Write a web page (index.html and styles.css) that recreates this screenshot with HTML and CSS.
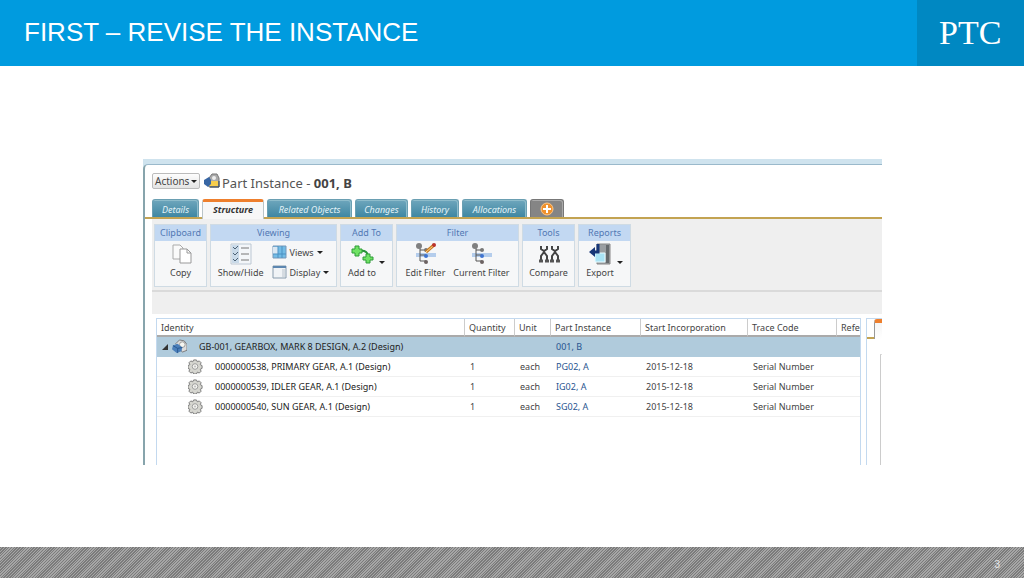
FILE: index.html
```html
<!DOCTYPE html>
<html lang="en">
<head>
<meta charset="utf-8">
<title>First – Revise the Instance</title>
<link rel="stylesheet" href="styles.css">
</head>
<body>
<svg class="defs" aria-hidden="true">
  <symbol id="gear" viewBox="0 0 16 16">
    <path d="M6 1h3l1 2 2-1 2 2-1 2 2 1v3l-2 1 1 2-2 2-2-1-1 2H6l-1-2-2 1-2-2 1-2-2-1V7l2-1-1-2 2-2 2 1z" fill="#d6d6d0" stroke="#777"/>
    <circle cx="7.500" cy="8" r="3" fill="#f2f2ee" stroke="#999"/>
    <circle cx="7.500" cy="8" r="1" fill="#bbb"/>
  </symbol>
  <symbol id="tree" viewBox="0 0 24 22">
    <path d="M3 12h20" stroke="#b4cdec" stroke-width="4"/>
    <path d="M7 4v14h6M7 7h6M7 12h6" fill="none" stroke="#555"/>
    <circle cx="6" cy="3" r="3" fill="#808080"/>
    <circle cx="13" cy="7" r="2" fill="#777"/>
    <circle cx="13" cy="13" r="2" fill="#3f74d0"/>
    <circle cx="13" cy="19" r="2" fill="#6c6262"/>
  </symbol>
</svg>
<header class="banner">
  <h1 class="banner-title">FIRST – REVISE THE INSTANCE</h1>
  <div class="brand">PTC</div>
</header>
<main class="stage">
  <section class="app">
    <div class="app-top"></div>
    <div class="app-body">
      <div class="heading">
        <button class="actions" type="button">Actions <span class="caret"></span></button>
        <svg class="part-icon" viewBox="0 0 16 16"><path d="M5 5l3-4h5l2 4v9H5z" fill="#aaa" stroke="#777"/><circle cx="10" cy="5" r="2" fill="#eee"/><path d="M5 8h9v5H5z" fill="#f6cd4c"/><path d="M0 7l5-3 2 3v4l-3 3-4-3z" fill="#3866a4"/><path d="M6 14h9V8" stroke="#345" fill="none"/></svg>
        <h2 class="object-name">Part Instance - <b>001, B</b></h2>
      </div>
      <nav class="tabs">
        <a class="tab tab-details" href="#">Details</a>
        <a class="tab tab-structure active" href="#">Structure</a>
        <a class="tab tab-related" href="#">Related Objects</a>
        <a class="tab tab-changes" href="#">Changes</a>
        <a class="tab tab-history" href="#">History</a>
        <a class="tab tab-allocations" href="#">Allocations</a>
        <a class="tab tab-new" href="#" aria-label="New tab"><svg class="plus" viewBox="0 0 14 14"><circle cx="7" cy="7" r="6" fill="#f0912c" stroke="#ffc888"/><path d="M7 3v8M3 7h8" stroke="#fff" stroke-width="2"/></svg></a>
      </nav>
      <div class="toolbar">
        <section class="group group-small">
          <h3 class="group-title">Clipboard</h3>
          <div class="group-body">
            <button class="tool" type="button"><svg class="tool-icon" viewBox="0 0 24 22"><path d="M4 2h7l3 3v11H4z" fill="#fafafa" stroke="#aaa"/><path d="M11 6h7l4 4v10H11z" fill="#fff" stroke="#999"/><path d="M18 6v4h4" fill="none" stroke="#999"/></svg>Copy</button>
          </div>
        </section>
        <section class="group group-view">
          <h3 class="group-title">Viewing</h3>
          <div class="group-body">
            <button class="tool" type="button"><svg class="tool-icon" viewBox="0 0 24 22"><path d="M2 1h20v20H2z" fill="#f3f6f9" stroke="#bcc8d3"/><path d="M3 2h7v18H3z" fill="#c9dae9"/><path d="M4 4l2 2 3-3M4 10l2 2 3-3M4 16l2 2 3-3" fill="none" stroke="#4d6274"/><path d="M12 5h8M12 11h8M12 17h8" stroke="#777"/></svg>Show/Hide</button>
            <div class="stack">
              <button class="mini" type="button"><svg class="mini-icon" viewBox="0 0 15 14"><path d="M1 1h13v12H1z" fill="#73bce6" stroke="#7797b8"/><path d="M1 2h5v7H1z" fill="#d9e7f3"/><path d="M6 1v12M10 1v12M1 9h13" stroke="#4c91c2"/></svg>Views <span class="caret"></span></button>
              <button class="mini" type="button"><svg class="mini-icon" viewBox="0 0 15 14"><path d="M1 1h13v12H1z" fill="#f0f3f6" stroke="#899cad"/><path d="M1 2h13" stroke="#5c86b0" stroke-width="2"/><path d="M10 4h3v8h-3z" fill="#d5dbe1"/></svg>Display <span class="caret"></span></button>
            </div>
          </div>
        </section>
        <section class="group group-small">
          <h3 class="group-title">Add To</h3>
          <div class="group-body">
            <button class="tool" type="button"><svg class="tool-icon" viewBox="0 0 24 22"><path d="M10 8q7-1 8 5" fill="none" stroke="#29923a" stroke-width="2"/><path d="M5 3h4v3h3v4H9v3H5v-3H2V6h3z" fill="#6fe264" stroke="#2f9c38"/><path d="M16 11h4v3h3v3h-3v3h-4v-3h-3v-3h3z" fill="#6fe264" stroke="#2f9c38"/></svg>Add to</button>
            <span class="caret caret-side"></span>
          </div>
        </section>
        <section class="group group-filter">
          <h3 class="group-title">Filter</h3>
          <div class="group-body">
            <button class="tool" type="button"><svg class="tool-icon" viewBox="0 0 24 22"><use href="#tree"/><path d="M13 9l8-7" stroke="#c97a22" stroke-width="3"/><path d="M13 9l7-6" stroke="#ffd98a"/><circle cx="21" cy="2" r="2" fill="#ba332d"/></svg>Edit Filter</button>
            <button class="tool" type="button"><svg class="tool-icon" viewBox="0 0 24 22"><use href="#tree"/></svg>Current Filter</button>
          </div>
        </section>
        <section class="group group-small">
          <h3 class="group-title">Tools</h3>
          <div class="group-body">
            <button class="tool" type="button"><svg class="tool-icon" viewBox="0 0 24 22"><g fill="none" stroke="#444" stroke-width="2"><path d="M4 3v3l3 2 3-2V3M7 8v2M7 9l-3 4v5M7 9l3 4v5"/><path d="M15 3v3l3 2 3-2V3M18 8v2M18 9l-3 4v5M18 9l3 4v5"/></g><path d="M2 18h4M8 18h4M13 18h4M19 18h4" stroke="#555" stroke-width="3"/></svg>Compare</button>
          </div>
        </section>
        <section class="group group-small">
          <h3 class="group-title">Reports</h3>
          <div class="group-body">
            <button class="tool" type="button"><svg class="tool-icon" viewBox="0 0 24 22"><path d="M9 1h13v20H9z" fill="#9a9ea1" stroke="#888"/><path d="M18 2h3v18h-3z" fill="#65696c"/><path d="M7 10h10v9H7z" fill="#a9e4f6" stroke="#e9fbff"/><path d="M10 1v8H5" fill="none" stroke="#173778" stroke-width="3"/><path d="M1 9l6-5v10z" fill="#173778"/></svg>Export</button>
            <span class="caret caret-side"></span>
          </div>
        </section>
      </div>
      <div class="subbar"></div>
      <div class="content">
        <div class="grid">
          <table class="parts">
            <colgroup><col><col class="col-qty"><col class="col-unit"><col class="col-part"><col class="col-start"><col class="col-trace"><col class="col-ref"></colgroup>
            <thead><tr><th>Identity</th><th>Quantity</th><th>Unit</th><th>Part Instance</th><th>Start Incorporation</th><th>Trace Code</th><th>Refe</th></tr></thead>
            <tbody>
              <tr class="selected"><td><div class="identity root"><svg class="expander" viewBox="0 0 6 6"><path d="M6 0v6H0z" fill="#333"/></svg><svg class="row-icon" viewBox="0 0 16 16"><path d="M4 5l4-4 5 1 3 4v6l-5 2z" fill="#ddd" stroke="#777"/><circle cx="11" cy="6" r="3" fill="#f6f6f1" stroke="#999"/><path d="M1 7l5-2 5 4-1 4-5 2-5-4z" fill="#4b7fba"/><path d="M1 7l5 3 5-1M6 10v5" fill="none" stroke="#27588f"/></svg>GB-001, GEARBOX, MARK 8 DESIGN, A.2 (Design)</div></td><td></td><td></td><td><a class="link" href="#">001, B</a></td><td></td><td></td><td></td></tr>
              <tr><td><div class="identity child"><svg class="row-icon"><use href="#gear"/></svg>0000000538, PRIMARY GEAR, A.1 (Design)</div></td><td>1</td><td>each</td><td><a class="link" href="#">PG02, A</a></td><td>2015-12-18</td><td>Serial Number</td><td></td></tr>
              <tr><td><div class="identity child"><svg class="row-icon"><use href="#gear"/></svg>0000000539, IDLER GEAR, A.1 (Design)</div></td><td>1</td><td>each</td><td><a class="link" href="#">IG02, A</a></td><td>2015-12-18</td><td>Serial Number</td><td></td></tr>
              <tr><td><div class="identity child"><svg class="row-icon"><use href="#gear"/></svg>0000000540, SUN GEAR, A.1 (Design)</div></td><td>1</td><td>each</td><td><a class="link" href="#">SG02, A</a></td><td>2015-12-18</td><td>Serial Number</td><td></td></tr>
            </tbody>
          </table>
        </div>
        <aside class="side">
          <div class="side-tabs"><span class="side-rule"></span><span class="side-tab"></span></div>
          <div class="side-pane"></div>
        </aside>
      </div>
    </div>
  </section>
</main>
<footer class="footer">3</footer>
</body>
</html>
```
FILE: styles.css
```css
* { box-sizing: border-box; }
body {
  margin: 0;
  min-height: 100vh;
  display: flex;
  flex-direction: column;
  background: #fff;
  color: #444;
  font-family: "Noto Sans", sans-serif;
  font-size: 9px;
}
.defs { display: none; }
svg { flex: none; }
h1, h2, h3 { margin: 0; font-weight: 400; }
a { text-decoration: none; color: inherit; }
button { font: inherit; color: inherit; border: 0; background: none; padding: 0; white-space: nowrap; }

.banner { display: flex; height: 66px; background: #009bdf; color: #fff; }
.banner-title {
  flex: 1;
  padding-left: 24px;
  font-family: "Liberation Sans", Arial, sans-serif;
  font-size: 26px;
  line-height: 64px;
  white-space: nowrap;
}
.brand {
  width: 107px;
  padding-left: 22px;
  background: #0088c2;
  font-family: "Liberation Serif", serif;
  font-size: 34px;
  line-height: 66px;
}

.stage { flex: 1; display: flex; padding: 93px 142px 82px 143px; }
.app { flex: 1; min-width: 0; display: flex; flex-direction: column; background: #cfe3ee; }
.app-top { height: 5px; }
.app-body {
  flex: 1;
  display: flex;
  flex-direction: column;
  border-left: 2px solid #87a4ac;
  border-top: 1px solid #9ab9cb;
  border-top-left-radius: 5px;
  background: #fff;
}
.heading { display: flex; align-items: center; height: 34px; padding-left: 7px; }
.actions {
  height: 16px;
  width: 48px;
  margin-bottom: 2px;
  border: 1px solid #bbb;
  border-radius: 2px;
  background: linear-gradient(#fdfdfd, #e4e4e4);
  font-size: 10px;
  line-height: 13px;
}
.caret {
  display: inline-block;
  vertical-align: middle;
  border: 3px solid transparent;
  border-top-color: #222;
  border-bottom: 0;
}
.actions .caret { margin-left: -1px; }
.part-icon { width: 16px; height: 16px; margin: 0 2px 2px 4px; }
.object-name { font-size: 13px; color: #555; padding-top: 2px; }
.object-name b { color: #444; }

.tabs { display: flex; gap: 3px; height: 20px; padding-left: 7px; border-bottom: 2px solid #c3a352; }
.tab {
  border: 1px solid #6a9fb2;
  border-bottom: 0;
  border-radius: 3px 3px 0 0;
  background: linear-gradient(#6ea6bc, #3f87a3);
  box-shadow: inset -1px 1px #8dbccb;
  color: #e4f3f8;
  font-style: italic;
  text-align: center;
  line-height: 20px;
  white-space: nowrap;
}
.tab-details { width: 47px; }
.tab-structure { width: 62px; }
.tab-related { width: 85px; }
.tab-changes { width: 53px; }
.tab-history { width: 48px; }
.tab-allocations { width: 65px; }
.tab-new { width: 34px; background: #858585; border-color: #777; box-shadow: inset -1px 1px #aaa; }
.tab.active {
  margin-bottom: -2px;
  border: 1px solid #b9c4c8;
  border-top: 3px solid #ee7f2d;
  border-bottom: 0;
  background: #f7f7f7;
  box-shadow: none;
  color: #333;
  font-weight: 700;
  line-height: 16px;
}
.plus { width: 14px; height: 14px; display: block; margin: 2px auto; }

.toolbar {
  display: flex;
  gap: 3px;
  margin-left: 7px;
  padding: 5px 2px 3px;
  background: #efefef;
  border-bottom: 2px solid #dadada;
}
.group { height: 63px; border: 1px solid #cfdbe4; background: #f6f7f8; }
.group-small { width: 53px; }
.group-view { width: 127px; }
.group-filter { width: 123px; }
.group-title { height: 16px; background: #c2d8f2; color: #5278b4; font-size: 9px; line-height: 16px; text-align: center; }
.group-body { display: flex; justify-content: center; gap: 8px; padding-top: 2px; }
.tool { display: flex; flex-direction: column; align-items: center; line-height: 16px; }
.tool-icon { width: 24px; height: 22px; }
.stack { display: flex; flex-direction: column; gap: 6px; padding-top: 2px; }
.mini { display: flex; align-items: center; gap: 3px; height: 14px; }
.mini-icon { width: 15px; height: 14px; }
.group-small .group-body { gap: 3px; }
.caret-side { margin-top: 18px; height: 3px; }
.subbar { height: 22px; margin-left: 7px; background: #efefef; }

.content { flex: 1; display: flex; gap: 5px; padding: 4px 0 0 11px; }
.grid { flex: 1; min-width: 0; border: 1px solid #c3d9ef; border-bottom: 0; overflow: hidden; }
.parts { width: 100%; table-layout: fixed; border-collapse: separate; border-spacing: 0; }
.col-qty { width: 50px; }
.col-unit { width: 36px; }
.col-part { width: 90px; }
.col-start { width: 107px; }
.col-trace { width: 89px; }
.col-ref { width: 23px; }
.parts th {
  height: 18px;
  padding: 0 0 0 4px;
  border-bottom: 2px solid #aaa;
  border-right: 1px solid #ccc;
  font-weight: 400;
  text-align: left;
  white-space: nowrap;
  overflow: hidden;
}
.parts th:last-child { border-right: 0; }
.parts td { height: 20px; padding: 0 0 0 5px; border-bottom: 1px solid #f0f0f0; white-space: nowrap; }
.parts td:first-child { color: #222; }
.parts .selected td { background: #b0cbdc; border-color: #b0cbdc; }
.identity { display: flex; align-items: center; }
.row-icon { width: 15px; height: 15px; }
.root .row-icon { margin: 0 12px 0 4px; }
.child { padding-left: 26px; }
.child .row-icon { margin-right: 12px; }
.expander { width: 6px; height: 6px; }
.link { color: #285590; }

.side { width: 16px; display: flex; flex-direction: column; border-left: 1px solid #c3d9ef; border-top: 1px solid #c3d9ef; }
.side-tabs { display: flex; height: 20px; }
.side-rule { width: 7px; border-bottom: 2px solid #c3a352; }
.side-tab { flex: 1; border-left: 1px solid #999; border-top: 4px solid #ee7f2d; border-top-left-radius: 3px; background: linear-gradient(#f5f5f5, #fff); }
.side-pane { flex: 1; margin: 15px 0 0 13px; border-left: 1px solid #ccc; border-top: 1px solid #ddd; }

.footer {
  height: 31px;
  padding-right: 24px;
  background: repeating-linear-gradient(135deg, #7b7b7b 0 1px, #a6a6a6 1px 2px);
  color: #e8e8e8;
  font-family: "Liberation Sans", Arial, sans-serif;
  font-size: 10px;
  line-height: 36px;
  text-align: right;
}
```
